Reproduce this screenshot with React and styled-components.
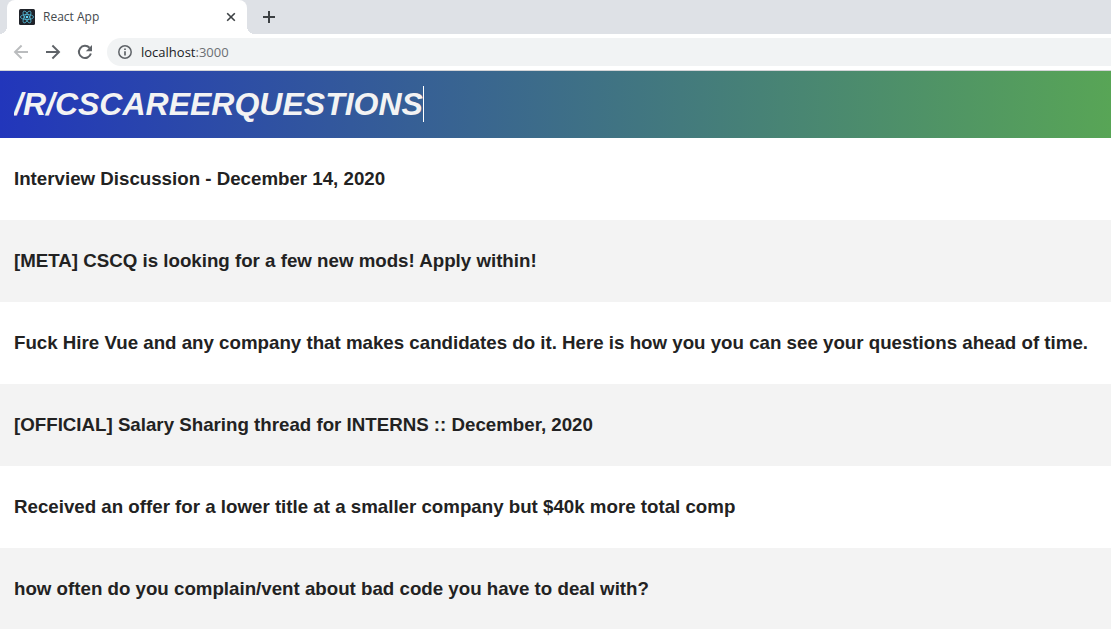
import React, { useState } from "react";
import styled, { createGlobalStyle } from "styled-components";

const GlobalStyle = createGlobalStyle`
  * { box-sizing: border-box; }
  body {
    margin: 0;
    background: #ffffff;
    font-family: "Liberation Sans", Arial, sans-serif;
  }
  button { font: inherit; }
`;

const Window = styled.div`
  display: flex;
  flex-direction: column;
  height: 100vh;
  overflow: hidden;
`;

const Chrome = styled.div`
  flex: none;
  border-bottom: 1px solid #d3d4d7;
  font-family: "Open Sans", "Noto Sans", sans-serif;
`;

const TabStrip = styled.div`
  display: flex;
  height: 34px;
  padding-left: 7px;
  background: #dee1e6;
`;

const Tab = styled.div`
  position: relative;
  display: flex;
  align-items: center;
  width: 240px;
  padding: 0 8px 0 12px;
  border-radius: 8px 8px 0 0;
  background: #ffffff;

  &::before,
  &::after {
    content: "";
    position: absolute;
    bottom: 0;
    width: 8px;
    height: 8px;
  }
  &::before {
    right: 100%;
    background: radial-gradient(circle at 0 0, transparent 8px, #ffffff 8px);
  }
  &::after {
    left: 100%;
    background: radial-gradient(circle at 100% 0, transparent 8px, #ffffff 8px);
  }
`;

const TabTitle = styled.span`
  flex: 1;
  margin-left: 8px;
  font-size: 12px;
  line-height: 16px;
  color: #45494d;
`;

const IconButton = styled.button`
  display: flex;
  align-items: center;
  justify-content: center;
  flex: none;
  width: ${(p) => p.$size}px;
  height: ${(p) => p.$size}px;
  padding: 0;
  border: 0;
  background: none;
  color: ${(p) => p.$color || "#5f6368"};
`;

const NewTab = styled(IconButton)`
  align-self: center;
  margin-left: 8px;
`;

const Toolbar = styled.div`
  display: flex;
  align-items: center;
  height: 36px;
  padding-left: 5px;
`;

const AddressBar = styled.div`
  display: flex;
  align-items: center;
  flex: 1;
  height: 28px;
  margin-left: 6px;
  padding-left: 10px;
  border-radius: 14px 0 0 14px;
  background: #f1f3f4;
  color: #5f6368;
`;

const Address = styled.a`
  margin-left: 8px;
  font-size: 13px;
  line-height: 20px;
  color: #6b6f73;
  text-decoration: none;
`;

const Host = styled.span`
  color: #202124;
`;

const Header = styled.header`
  display: flex;
  flex: none;
  padding: 15px 14px 16px;
  background: linear-gradient(90deg, #2236bb, #58a556);
`;

const SubredditInput = styled.input`
  field-sizing: content;
  height: 36px;
  padding: 0;
  border: 0;
  outline: 0;
  background: transparent;
  color: #f3f3f3;
  font-family: inherit;
  font-size: 32px;
  font-style: italic;
  font-weight: bold;
  text-transform: uppercase;
  caret-color: transparent;
`;

const Caret = styled.span`
  width: 1px;
  height: 36px;
  background: #ffffff;
`;

const Posts = styled.main`
  flex: 1;
  min-height: 0;
  overflow: hidden;
`;

const Post = styled.article`
  display: flex;
  align-items: center;
  height: 82px;
  padding: 0 14px;

  &:nth-child(even) {
    background: #f3f3f3;
  }
`;

const PostTitle = styled.h3`
  margin: 0;
  line-height: 22px;
  color: #222222;
  white-space: nowrap;
`;

const posts = [
  "Interview Discussion - December 14, 2020",
  "[META] CSCQ is looking for a few new mods! Apply within!",
  "Fuck Hire Vue and any company that makes candidates do it. Here is how you you can see your questions ahead of time.",
  "[OFFICIAL] Salary Sharing thread for INTERNS :: December, 2020",
  "Received an offer for a lower title at a smaller company but $40k more total comp",
  "how often do you complain/vent about bad code you have to deal with?",
];

const ReactIcon = () => (
  <svg width="16" height="16" viewBox="0 0 16 16" aria-hidden="true">
    <rect width="16" height="16" rx="1.5" fill="#20232a" />
    <g fill="none" stroke="#53b9d5" strokeWidth="0.8">
      <ellipse cx="8" cy="8" rx="6.6" ry="2.5" />
      <ellipse cx="8" cy="8" rx="6.6" ry="2.5" transform="rotate(60 8 8)" />
      <ellipse cx="8" cy="8" rx="6.6" ry="2.5" transform="rotate(120 8 8)" />
    </g>
    <circle cx="8" cy="8" r="1.3" fill="#61dafb" />
  </svg>
);

const CloseIcon = () => (
  <svg width="16" height="16" viewBox="0 0 16 16" aria-hidden="true">
    <path d="M4.2 4.2l7.6 7.6M11.8 4.2l-7.6 7.6" stroke="#3c4043" strokeWidth="1.6" />
  </svg>
);

const PlusIcon = () => (
  <svg width="16" height="16" viewBox="0 0 16 16" aria-hidden="true">
    <path d="M8 2v12M2 8h12" stroke="#3c4043" strokeWidth="2" />
  </svg>
);

const ArrowIcon = ({ back }) => (
  <svg width="16" height="16" viewBox="0 0 16 16" fill="none" stroke="currentColor" strokeWidth="1.9" aria-hidden="true">
    <path d={back ? "M15 8H2.4M8.6 1.5L2 8l6.6 6.5" : "M1 8h12.6M7.4 1.5L14 8l-6.6 6.5"} />
  </svg>
);

const ReloadIcon = () => (
  <svg width="16" height="16" viewBox="0 0 16 16" aria-hidden="true">
    <path d="M13.9 9.6A6.1 6.1 0 1 1 12.5 3.8" fill="none" stroke="currentColor" strokeWidth="2" />
    <path d="M15 1v6.2H8.8z" fill="currentColor" />
  </svg>
);

const InfoIcon = () => (
  <svg width="16" height="16" viewBox="0 0 16 16" aria-hidden="true">
    <circle cx="8" cy="8" r="6.2" fill="none" stroke="currentColor" strokeWidth="1.5" />
    <path d="M8 7.2v4.3M8 4.4v1.7" stroke="currentColor" strokeWidth="1.7" />
  </svg>
);

export default function App() {
  const [subreddit, setSubreddit] = useState("/r/cscareerquestions");

  return (
    <>
      <GlobalStyle />
      <Window>
        <Chrome>
          <TabStrip>
            <Tab>
              <ReactIcon />
              <TabTitle>React App</TabTitle>
              <IconButton $size={16} aria-label="Close tab">
                <CloseIcon />
              </IconButton>
            </Tab>
            <NewTab $size={28} aria-label="New tab">
              <PlusIcon />
            </NewTab>
          </TabStrip>
          <Toolbar>
            <IconButton $size={32} $color="#babcbe" aria-label="Back">
              <ArrowIcon back />
            </IconButton>
            <IconButton $size={32} aria-label="Forward">
              <ArrowIcon />
            </IconButton>
            <IconButton $size={32} aria-label="Reload">
              <ReloadIcon />
            </IconButton>
            <AddressBar>
              <InfoIcon />
              <Address href="#">
                <Host>localhost</Host>:3000
              </Address>
            </AddressBar>
          </Toolbar>
        </Chrome>
        <Header>
          <SubredditInput
            aria-label="Subreddit"
            spellCheck={false}
            value={subreddit}
            onChange={(e) => setSubreddit(e.target.value)}
          />
          <Caret />
        </Header>
        <Posts>
          {posts.map((title) => (
            <Post key={title}>
              <PostTitle>{title}</PostTitle>
            </Post>
          ))}
        </Posts>
      </Window>
    </>
  );
}
